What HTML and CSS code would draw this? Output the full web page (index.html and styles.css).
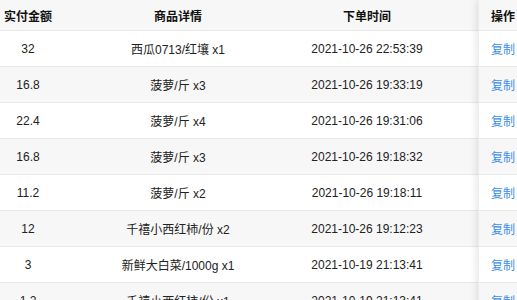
FILE: index.html
```html
<!DOCTYPE html>
<html>
<head>
<meta charset="utf-8">
<link rel="stylesheet" href="styles.css">
</head>
<body>
<div class="table">
  <div class="main">
    <div class="row head"><div class="c1">实付金额</div><div class="c2">商品详情</div><div class="c3">下单时间</div><div class="c4"></div></div>
    <div class="row"><div class="c1">32</div><div class="c2">西瓜0713/红壤 x1</div><div class="c3">2021-10-26 22:53:39</div><div class="c4"></div></div>
    <div class="row alt"><div class="c1">16.8</div><div class="c2">菠萝/斤 x3</div><div class="c3">2021-10-26 19:33:19</div><div class="c4"></div></div>
    <div class="row"><div class="c1">22.4</div><div class="c2">菠萝/斤 x4</div><div class="c3">2021-10-26 19:31:06</div><div class="c4"></div></div>
    <div class="row alt"><div class="c1">16.8</div><div class="c2">菠萝/斤 x3</div><div class="c3">2021-10-26 19:18:32</div><div class="c4"></div></div>
    <div class="row"><div class="c1">11.2</div><div class="c2">菠萝/斤 x2</div><div class="c3">2021-10-26 19:18:11</div><div class="c4"></div></div>
    <div class="row alt"><div class="c1">12</div><div class="c2">千禧小西红柿/份 x2</div><div class="c3">2021-10-26 19:12:23</div><div class="c4"></div></div>
    <div class="row"><div class="c1">3</div><div class="c2">新鲜大白菜/1000g x1</div><div class="c3">2021-10-19 21:13:41</div><div class="c4"></div></div>
    <div class="row alt"><div class="c1">1.2</div><div class="c2">千禧小西红柿/份 x1</div><div class="c3">2021-10-19 21:13:41</div><div class="c4"></div></div>
  </div>
  <div class="fixed">
    <div class="frow head">操作</div>
    <div class="frow"><a class="link">复制</a></div>
    <div class="frow alt"><a class="link">复制</a></div>
    <div class="frow"><a class="link">复制</a></div>
    <div class="frow alt"><a class="link">复制</a></div>
    <div class="frow"><a class="link">复制</a></div>
    <div class="frow alt"><a class="link">复制</a></div>
    <div class="frow"><a class="link">复制</a></div>
    <div class="frow alt"><a class="link">复制</a></div>
  </div>
</div>
</body>
</html>
```

FILE: styles.css
```css
html, body {
  margin: 0;
  padding: 0;
  overflow: hidden;
  background: #fff;
}
body {
  font-family: "Liberation Sans", Arial, "Noto Sans CJK SC", sans-serif;
  font-size: 12px;
  color: #222;
}
.table {
  display: flex;
  width: 560px;
}
.main {
  flex: 0 0 478px;
}
.row {
  display: grid;
  grid-template-columns: 56px 244px 134px 44px;
  height: 35px;
  align-items: center;
  text-align: center;
  border-bottom: 1px solid #e8e8e8;
  background: #fff;
}
.row.head, .frow.head {
  height: 30px;
  background: #f7f7f7;
  font-weight: bold;
  color: #111;
}
.alt {
  background: #f7f7f7 !important;
}
.fixed {
  flex: 0 0 70px;
  background: #fff;
  box-shadow: -3px 0 6px rgba(0, 0, 0, 0.08);
  border-left: 1px solid #ececec;
}
.frow {
  height: 35px;
  display: flex;
  align-items: center;
  padding-left: 12px;
  border-bottom: 1px solid #e8e8e8;
  background: #fff;
}
.link {
  color: #3b8fe8;
  font-size: 12px;
}
```
